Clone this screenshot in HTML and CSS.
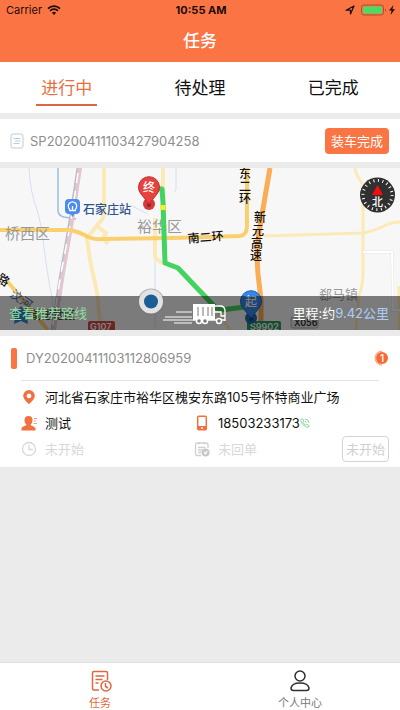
FILE: index.html
```html
<!DOCTYPE html>
<html lang="zh-CN">
<head>
    <meta charset="UTF-8">
    <meta name="viewport" content="width=device-width, initial-scale=1">
    <title>任务</title>
    <link rel="stylesheet" href="styles.css">
</head>
<body>
    <header class="header">
        <div class="status-bar">
            <div class="status-left">
                <span>Carrier</span>
                <svg width="14" height="10" viewBox="0 0 14 10">
                    <path d="M1 3.6a8.6 8.6 0 0 1 12 0M3 5.8a5.7 5.7 0 0 1 8 0" fill="none" stroke="#1c0d08" stroke-width="1.8"/>
                    <path d="M4.9 7.7a3 3 0 0 1 4.2 0L7 9.9z" fill="#1c0d08"/>
                </svg>
            </div>
            <strong>10:55 AM</strong>
            <div class="status-right">
                <svg width="10" height="10" viewBox="0 0 10 10">
                    <path d="M1 5.2L9 1 5.5 9V5.2z" fill="none" stroke="#1c0d08" stroke-width="1.2" stroke-linejoin="round"/>
                </svg>
                <svg width="36" height="12" viewBox="0 0 36 12">
                    <rect x="1.5" y="1" width="22" height="10" rx="2.5" fill="none" stroke="#a8502f"/>
                    <rect x="3" y="2.5" width="19" height="7" rx="1" fill="#4cd964"/>
                    <path d="M25 4.4v3.2q1-.5 1-1.6t-1-1.6z" fill="#a8502f"/>
                    <path d="M33.5 1L29 6.6h2.6L30.500 11l4.500-5.800h-2.600z" fill="#1c0d08"/>
                </svg>
            </div>
        </div>
        <h1>任务</h1>
    </header>

    <nav class="tabs">
        <a href="#doing" class="tab active">进行中</a>
        <a href="#pending" class="tab">待处理</a>
        <a href="#done" class="tab">已完成</a>
    </nav>

    <main>
        <section class="order">
            <svg width="14" height="16" viewBox="0 0 14 16" fill="none" stroke="#bccdda">
                <rect x="1" y="1" width="12" height="14" rx="2"/>
                <path d="M3.5 5.5h7M5 8h5.5M3.5 10.5h6"/>
            </svg>
            <span class="number">SP20200411103427904258</span>
            <button class="load-btn">装车完成</button>
        </section>

        <section class="map">
            <svg class="map-canvas" viewBox="0 0 400 162">
                <rect width="400" height="162" fill="#f7f7f7"/>
                <!-- water -->
                <g fill="none" stroke="#d3e0f5">
                    <path d="M29 0q1 24 9 45 5 18 6 35 4 30 8 50l3 32"/>
                    <path d="M176 0v22l-2 2M155 75v87M130 37l18 9"/>
                </g>
                <path d="M58 0v43q1 5 6 6l12 2" fill="none" stroke="#9dbfdf" stroke-width="1.5"/>
                <!-- railway -->
                <path d="M79 0L71 53 62 105 53 162" fill="none" stroke="#b9bfca" stroke-width="5"/>
                <path d="M80 0L72 53 63 105 54 162" fill="none" stroke="#e3c6d0" stroke-width="4"/>
                <path d="M78 5L71 53 61 105 52 162" fill="none" stroke="#fff" stroke-width="1.5" stroke-dasharray="10 8"/>
                <!-- minor roads -->
                <g fill="none" stroke="#fbe9b6" stroke-width="3">
                    <path d="M104 0v45q0 6-5 10L87 70l3 22 7 32 4 38" stroke-width="4"/>
                    <path d="M97 58l9 7-3 5 5 6" stroke-width="4"/>
                    <path d="M163 0v23M155 50v38q0 4 10 8" stroke-width="4"/>
                    <path d="M264 68l98-3q10-1 24-8 6-3 14-3"/>
                    <path d="M355 0q0 5 5 12 3 3 3 10v82q0 14-4 23l-3 35M399 118v44"/>
                    <path d="M216 142l14 20"/>
                </g>
                <path d="M363 84h29l1 58h8" fill="none" stroke="#e5e5e5" stroke-width="3"/>
                <path d="M363 84h29l1 58h8" fill="none" stroke="#fff" stroke-width="2"/>
                <!-- main roads -->
                <g fill="none" stroke="#fad06f" stroke-width="4">
                    <path d="M0 62h70q10 2 18 7 7 3 14 2l70-1 68-2q7-1 7-10V0"/>
                    <path d="M7 113l41 49"/>
                </g>
                <path d="M270 0L259 64q-3 18-1 42l3 26v30" fill="none" stroke="#faad54" stroke-width="5"/>

                <g class="place">
                    <text x="5" y="71">桥西区</text>
                    <text x="137" y="64">裕华区</text>
                    <text x="319" y="131" class="town">郄马镇</text>
                </g>
                <g class="road-name">
                    <text x="188" y="75" transform="rotate(-5 188 75)">南二环</text>
                    <text x="239" y="10">东</text>
                    <text x="239" y="23">二</text>
                    <text x="239" y="35">环</text>
                    <text x="254" y="54">新</text>
                    <text x="252" y="67">元</text>
                    <text x="251" y="80">高</text>
                    <text x="250" y="92">速</text>
                    <text x="-4" y="112" transform="rotate(35 -4 112)">路</text>
                    <text x="31" y="151" class="area">前进地区</text>
                </g>
                <g class="river-name">
                    <text x="9" y="128" transform="rotate(35 9 128)">汶河</text>
                </g>

                <!-- station -->
                <rect x="65" y="31" width="15" height="15" rx="4" fill="#4b8bf2"/>
                <path d="M70 45h5l-2.5 4z" fill="#4b8bf2"/>
                <path d="M70 41.500a4.200 4.200 0 1 1 5 0M72.500 38v4M69 42.500h7" fill="none" stroke="#fff" stroke-width="1.3"/>
                <text x="83" y="46" class="station-name">石家庄站</text>

                <!-- road signs -->
                <rect x="88" y="153" width="27" height="12" rx="2" fill="#d34a48"/>
                <text x="90" y="162" class="sign light">G107</text>
                <rect x="247" y="153" width="34" height="12" rx="2" fill="#299a62"/>
                <text x="250" y="162" class="sign light">S9902</text>
                <rect x="291" y="149" width="27" height="11" rx="2" fill="#e7e7e7" stroke="#aaa"/>
                <text x="294" y="158" class="sign">X056</text>
                <path d="M21 138l4 5 7 1-5 5 1 7-7-3-7 3 1-7-5-5 7-1z" fill="#3587cc"/>

                <!-- route -->
                <path d="M154 20l8 1 1 13 2 61 13 5 37 39 6 3 24-3 9 2" fill="none" stroke="#43d35f" stroke-width="5" stroke-linejoin="round"/>
                <path d="M163 37v5" stroke="#f6ef24" stroke-width="5"/>
                <circle cx="149" cy="36" r="6" fill="#d43b38"/>
                <circle cx="149" cy="37" r="2" fill="#8c2427"/>
                <path d="M149 36l-8-10a10.5 10.5 0 1 1 16 0z" fill="#e8423e" stroke="#bd302f"/>
                <text x="149" y="24" class="pin-text">终</text>
                <circle cx="251" cy="150" r="6" fill="#2067b0"/>
                <circle cx="251" cy="151" r="2" fill="#173e72"/>
                <path d="M251 150l-8-10a10.500 10.500 0 1 1 16 0z" fill="#3487ee" stroke="#1d65bd"/>
                <text x="251" y="138" class="pin-text">起</text>

                <!-- compass -->
                <circle cx="377.5" cy="27" r="17.5" fill="#303030"/>
                <circle cx="377.5" cy="27" r="14.500" fill="none" stroke="#fff" stroke-width="3" stroke-dasharray="1 3.555"/>
                <path d="M377.500 17l5.500 10h-11z" fill="#f50d0d"/>
                <text x="377.500" y="38" class="compass-text">北</text>
            </svg>
            <div class="route-bar">
                <a href="#route">查看推荐路线</a>
                <span>里程:约<b>9.42公里</b></span>
            </div>
            <svg class="map-canvas map-top" viewBox="0 0 400 162">
                <circle cx="151" cy="134" r="13.5" fill="#777" opacity="0.5"/>
                <circle cx="151" cy="133.5" r="12" fill="#e2e2e2"/>
                <circle cx="151" cy="133.5" r="7" fill="#1b5d95"/>
                <!-- truck -->
                <path d="M193 136h22v16h-22z" fill="#fff"/>
                <path d="M198 139v9M203 139v9M208 139v9M212 139v9" stroke="#777"/>
                <g fill="none" stroke="#fff" stroke-width="1.3">
                    <path d="M215 138h5q5 0 5 5v10M215 144h6v4h4M193 152h32"/>
                    <path d="M176 144h16M165 149h27M163 152h30M174 155h18" stroke-width="1"/>
                </g>
                <g fill="#777" stroke="#fff" stroke-width="1.5">
                    <circle cx="199" cy="153" r="2.5"/>
                    <circle cx="205" cy="153" r="2.5"/>
                    <circle cx="219" cy="153" r="2.5"/>
                </g>
            </svg>
        </section>

        <section class="task">
            <div class="task-head">
                <span class="number">DY20200411103112806959</span>
                <svg width="16" height="16" viewBox="0 0 16 16">
                    <path d="M9 1.200A6.800 6.800 0 0 0 9 14.800" fill="none" stroke="#f6ac8c" stroke-width="1.4"/>
                    <circle cx="9" cy="8" r="6" fill="#f46a36"/>
                    <text x="9" y="12" class="count">1</text>
                </svg>
            </div>
            <div class="task-body">
                <div class="row">
                    <div class="item">
                        <svg width="16" height="16" viewBox="0 0 16 16">
                            <path fill-rule="evenodd" d="M8 1a5.800 5.800 0 0 1 5.800 5.800C13.800 10 9.500 13.800 8 15.300 6.500 13.800 2.200 10 2.200 6.800A5.800 5.800 0 0 1 8 1zm0 3.500a2.400 2.400 0 1 0 0 4.800 2.400 2.400 0 0 0 0-4.800z" fill="#f26f3e"/>
                        </svg>
                        <span>河北省石家庄市裕华区槐安东路105号怀特商业广场</span>
                    </div>
                </div>
                <div class="row">
                    <div class="item half">
                        <svg width="16" height="16" viewBox="0 0 16 16">
                            <path d="M7.500 1c3 0 4.200 2 4 4.500-.1 2-1 3.400-2 4.300.3 1.300 4.800 1.600 5 3.700V15.500H.5v-2c.2-2.100 4.500-2.400 5-3.700-1-.9-2-2.300-2-4.300C3.400 3 4.600 1 7.500 1z" fill="#f26f3e"/>
                            <path d="M13 3.500h3M13 6h2M12.500 8.500H16" stroke="#f5a382"/>
                        </svg>
                        <span>测试</span>
                    </div>
                    <div class="item">
                        <svg width="16" height="16" viewBox="0 0 16 16">
                            <rect x="3.700" y="1.200" width="8.600" height="13.600" rx="1" fill="none" stroke="#f26f3e" stroke-width="1.5"/>
                            <path d="M4 11h8v3.500H4z" fill="#f26f3e"/>
                            <circle cx="8" cy="13" r="1" fill="#fff"/>
                        </svg>
                        <a href="tel:18503233173" class="phone">18503233173<svg width="10" height="10" viewBox="0 0 10 10" fill="none" stroke="#86dc97">
                            <path d="M1 1.200l1.500-.4 1.300 2.400-1 1q.8 2 2.900 3l1-1 2.300 1.400-.5 1.500Q7 9.700 4.500 8 1.200 5.500.8 2.500zM5 3l1.500 1.500M5.200 1q3.500.2 3.700 3.700"/>
                        </svg></a>
                    </div>
                </div>
                <div class="row muted">
                    <div class="item half">
                        <svg width="16" height="16" viewBox="0 0 16 16" fill="none" stroke="#d8d8d8" stroke-width="1.3">
                            <circle cx="8" cy="8" r="6.500"/>
                            <path d="M8 4v4.500h4"/>
                        </svg>
                        <span>未开始</span>
                    </div>
                    <div class="item">
                        <svg width="16" height="16" viewBox="0 0 16 16" fill="none" stroke="#d0d0d0" stroke-width="1.3">
                            <path d="M7 14.500H3a1.500 1.500 0 0 1-1.500-1.500V3.500A1.500 1.500 0 0 1 3 2h9.500A1.500 1.500 0 0 1 14 3.500V7M5 1v2.500M10.500 1v2.500M4 6.500h7.500M4 9h4M4 11.500h3"/>
                            <circle cx="11.500" cy="11.500" r="4" fill="#c8c8c8" stroke="none"/>
                            <path d="M10 11.500l1.500 1.200L13 10" stroke="#fff"/>
                        </svg>
                        <span>未回单</span>
                    </div>
                    <button class="state-btn">未开始</button>
                </div>
            </div>
        </section>
    </main>

    <footer class="tabbar">
        <a href="#task" class="active">
            <svg width="24" height="24" viewBox="0 0 24 24" fill="none" stroke="#dd6841" stroke-width="1.5">
                <path d="M11 21H6a1.500 1.500 0 0 1-1.500-1.500V4A1.500 1.500 0 0 1 6 2.500h12A1.500 1.500 0 0 1 19.500 4v7M7.500 7h9M7.500 10.500h7M7.500 14h3"/>
                <circle cx="18" cy="17" r="5"/>
                <path d="M17.500 14v3.500l2.500 1.500"/>
            </svg>
            <span>任务</span>
        </a>
        <a href="#me">
            <svg width="24" height="24" viewBox="0 0 24 24" fill="none" stroke="#303030" stroke-width="1.5">
                <circle cx="12" cy="7" r="5"/>
                <path d="M5.500 21.500h13q2.500 0 2.500-2.500-1-5-9-5t-9 5q0 2.500 2.500 2.500z"/>
            </svg>
            <span>个人中心</span>
        </a>
    </footer>
</body>
</html>
```

FILE: styles.css
```css
* {
    box-sizing: border-box;
}

body {
    margin: 0;
    min-height: 100vh;
    display: flex;
    flex-direction: column;
    background-color: #ebebeb;
    color: #111;
    font-family: Inter, "Noto Sans CJK SC", sans-serif;
    font-size: 13px;
    line-height: 20px;
}

a {
    color: inherit;
    text-decoration: none;
}

button {
    font: inherit;
    cursor: pointer;
}

svg {
    flex-shrink: 0;
}

/* Header */
.header {
    background-color: #fb7444;
}

.status-bar {
    display: grid;
    grid-template-columns: 1fr auto 1fr;
    align-items: center;
    height: 20px;
    padding: 0 4px 0 6px;
    color: #1c0d08;
    font-size: 11px;
}

.status-left,
.status-right {
    display: flex;
    align-items: center;
    gap: 5px;
}

.status-right {
    justify-content: flex-end;
}

.header h1 {
    margin: 0;
    color: #fff;
    font-size: 17px;
    font-weight: 500;
    line-height: 42px;
    text-align: center;
}

/* Top tabs */
.tabs {
    display: flex;
    height: 51px;
    background-color: #fff;
}

.tab {
    flex: 1;
    display: flex;
    flex-direction: column;
    align-items: center;
    font-size: 17px;
    line-height: 42px;
    padding-top: 5px;
}

.tab.active {
    color: #e8703f;
}

.tab.active::after {
    content: "";
    width: 61px;
    height: 2px;
    margin-top: -5px;
    background-color: #dc6840;
}

main {
    flex: 1;
    display: flex;
    flex-direction: column;
    gap: 6px;
    padding-top: 6px;
}

.number {
    flex: 1;
    color: #8e8e8e;
}

/* Order */
.order {
    display: flex;
    align-items: center;
    gap: 6px;
    height: 43px;
    padding: 0 11px 0 10px;
    background-color: #fff;
}

.load-btn {
    height: 26px;
    padding: 0 6px;
    border: none;
    border-radius: 4px;
    background-color: #fb7444;
    color: #fff;
}

/* Map */
.map {
    position: relative;
    overflow: hidden;
}

.map-canvas {
    display: block;
    width: 100%;
}

.map-top {
    position: absolute;
    top: 0;
    left: 0;
    pointer-events: none;
}

.route-bar {
    position: absolute;
    left: 0;
    right: 0;
    bottom: 0;
    display: flex;
    align-items: center;
    justify-content: space-between;
    height: 34px;
    padding: 0 11px 0 9px;
    background-color: rgba(0, 0, 0, 0.5);
    color: #fff;
}

.route-bar a {
    color: #92dfa0;
}

.route-bar b {
    color: #abcdf7;
    font-weight: normal;
}

.place {
    fill: #999;
    font-size: 15px;
}

.town {
    font-size: 13px;
}

.road-name {
    fill: #111;
    font-size: 12px;
    font-weight: 500;
}

.area {
    fill: #444;
    font-size: 11px;
}

.river-name {
    fill: #3b6cae;
    font-size: 12px;
}

.station-name {
    fill: #2e5390;
    font-size: 12px;
    font-weight: 500;
}

.sign {
    fill: #333;
    font-size: 9px;
    font-weight: 600;
}

.sign.light {
    fill: #fff;
}

.pin-text,
.compass-text {
    fill: #fff;
    font-size: 12px;
    font-weight: 500;
    text-anchor: middle;
}

.compass-text {
    font-size: 11px;
}

/* Task */
.task {
    padding: 0 11px 5px;
    background-color: #fff;
}

.task-head {
    display: flex;
    align-items: center;
    height: 44px;
}

.task-head::before {
    content: "";
    width: 6px;
    height: 21px;
    margin-right: 9px;
    border-radius: 2px;
    background-color: #fb7444;
}

.count {
    fill: #fff;
    font-size: 10px;
    font-weight: 500;
    text-anchor: middle;
}

.task-body {
    margin-left: 10px;
}

.task-body::before {
    content: "";
    display: block;
    height: 1px;
    margin: 0 10px 3px 0;
    background-color: #e2e2e2;
}

.row {
    display: flex;
    align-items: center;
    height: 26px;
}

.item {
    display: flex;
    align-items: center;
    gap: 8px;
}

.item.half {
    width: 47%;
}

.phone {
    display: flex;
    align-items: center;
}

.muted {
    color: #d8d8d8;
}

.state-btn {
    height: 26px;
    margin-left: auto;
    padding: 0 3px;
    border: 1px solid #d4d4d4;
    border-radius: 4px;
    background-color: #fff;
    color: #d0d0d0;
}

/* Bottom bar */
.tabbar {
    display: flex;
    height: 48px;
    border-top: 1px solid #e0e0e0;
    background-color: #fff;
}

.tabbar a {
    flex: 1;
    display: flex;
    flex-direction: column;
    align-items: center;
    padding-top: 6px;
    color: #777;
    font-size: 11px;
    line-height: 20px;
}

.tabbar .active {
    color: #dd6841;
}
```
